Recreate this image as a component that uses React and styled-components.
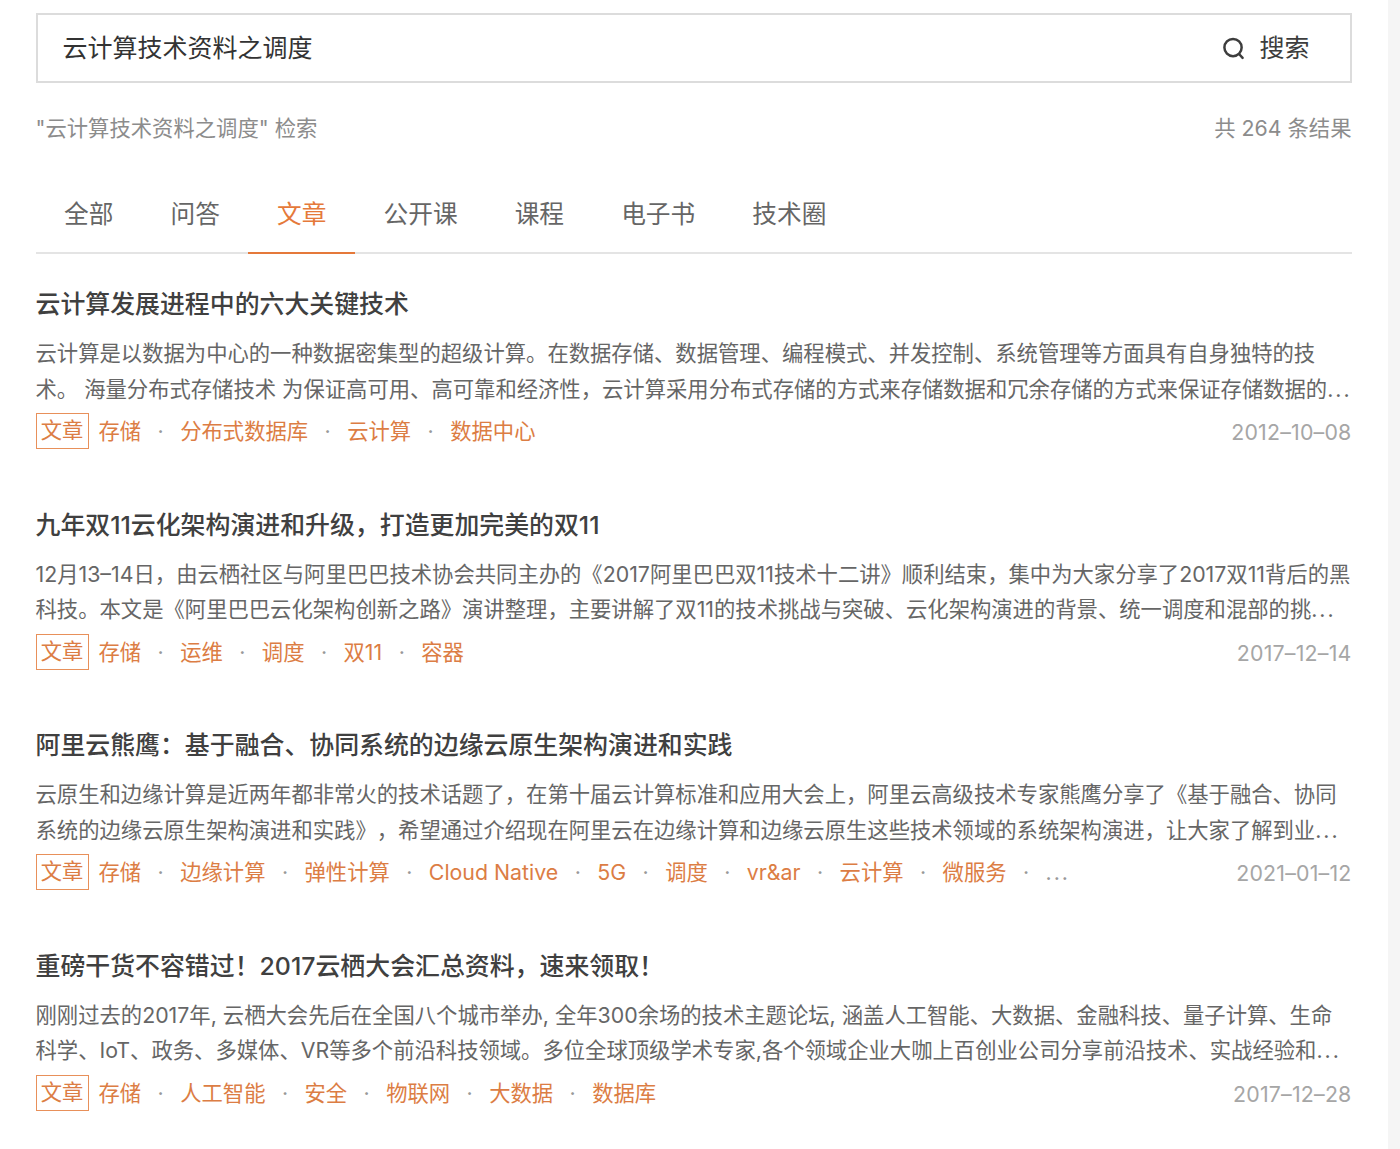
import styled, { createGlobalStyle } from "styled-components";

const tabs = ["全部", "问答", "文章", "公开课", "课程", "电子书", "技术圈"];

const articles = [
  {
    id: 1,
    title: "云计算发展进程中的六大关键技术",
    first: "云计算是以数据为中心的一种数据密集型的超级计算。在数据存储、数据管理、编程模式、并发控制、系统管理等方面具有自身独特的技",
    second: "术。 海量分布式存储技术 为保证高可用、高可靠和经济性，云计算采用分布式存储的方式来存储数据和冗余存储的方式来保证存储数据的",
    tags: ["存储", "分布式数据库", "云计算", "数据中心"],
    date: "2012–10–08",
  },
  {
    id: 2,
    title: "九年双11云化架构演进和升级，打造更加完美的双11",
    first: "12月13–14日，由云栖社区与阿里巴巴技术协会共同主办的《2017阿里巴巴双11技术十二讲》顺利结束，集中为大家分享了2017双11背后的黑",
    second: "科技。本文是《阿里巴巴云化架构创新之路》演讲整理，主要讲解了双11的技术挑战与突破、云化架构演进的背景、统一调度和混部的挑",
    tags: ["存储", "运维", "调度", "双11", "容器"],
    date: "2017–12–14",
  },
  {
    id: 3,
    title: "阿里云熊鹰：基于融合、协同系统的边缘云原生架构演进和实践",
    first: "云原生和边缘计算是近两年都非常火的技术话题了，在第十届云计算标准和应用大会上，阿里云高级技术专家熊鹰分享了《基于融合、协同",
    second: "系统的边缘云原生架构演进和实践》，希望通过介绍现在阿里云在边缘计算和边缘云原生这些技术领域的系统架构演进，让大家了解到业",
    tags: ["存储", "边缘计算", "弹性计算", "Cloud Native", "5G", "调度", "vr&ar", "云计算", "微服务"],
    more: true,
    date: "2021–01–12",
  },
  {
    id: 4,
    title: "重磅干货不容错过！2017云栖大会汇总资料，速来领取！",
    first: "刚刚过去的2017年, 云栖大会先后在全国八个城市举办, 全年300余场的技术主题论坛, 涵盖人工智能、大数据、金融科技、量子计算、生命",
    second: "科学、IoT、政务、多媒体、VR等多个前沿科技领域。多位全球顶级学术专家,各个领域企业大咖上百创业公司分享前沿技术、实战经验和",
    tags: ["存储", "人工智能", "安全", "物联网", "大数据", "数据库"],
    date: "2017–12–28",
  },
];

const SearchIcon = () => (
  <IconWrap>
    <svg width="24" height="24" viewBox="0 0 24 24" fill="none" stroke="#3d3d3d" strokeWidth="2.6" strokeLinecap="round">
      <circle cx="11.5" cy="11" r="9" />
      <path d="M18 18l3.5 3.8" />
    </svg>
  </IconWrap>
);

const App = () => {
  return (
    <Page>
      <GlobalStyle />
      <Main>
        <SearchBar>
          <SearchText>云计算技术资料之调度</SearchText>
          <SearchButton>
            <SearchIcon />
            <span>搜索</span>
          </SearchButton>
        </SearchBar>
        <Summary>
          <span>"云计算技术资料之调度" 检索</span>
          <span>共 264 条结果</span>
        </Summary>
        <Tabs>
          {tabs.map((tab) => (
            <Tab key={tab} $isActive={tab === "文章"}>
              {tab}
            </Tab>
          ))}
        </Tabs>
        {articles.map((article) => (
          <Article key={article.id}>
            <Title>{article.title}</Title>
            <Line>{article.first}</Line>
            <Line>
              {article.second}
              <Dots>...</Dots>
            </Line>
            <Meta>
              <TagList>
                <Badge>文章</Badge>
                {article.tags.map((tag) => (
                  <Tag key={tag}>{tag}</Tag>
                ))}
                {article.more && <More><Dots>...</Dots></More>}
              </TagList>
              <DateText>{article.date}</DateText>
            </Meta>
          </Article>
        ))}
      </Main>
    </Page>
  );
};

export default App;

const GlobalStyle = createGlobalStyle`
  html, body {
    margin: 0;
    padding: 0;
    background: #ffffff;
  }
  * {
    box-sizing: border-box;
  }
`;

const Page = styled.div`
  width: 1400px;
  height: 1149px;
  overflow: hidden;
  background: #ffffff;
  border-right: 12px solid #f5f5f5;
  font-family: Inter, "Noto Sans CJK SC", sans-serif;
  text-spacing-trim: space-all;
`;

const Main = styled.div`
  display: flex;
  flex-direction: column;
  width: 1316px;
  margin-left: 35.5px;
  padding-top: 13px;
`;

const SearchBar = styled.div`
  display: flex;
  justify-content: space-between;
  align-items: center;
  height: 70px;
  padding: 0 40px 4px 25px;
  border: 2px solid #dcdcdc;
`;

const SearchText = styled.span`
  font-size: 25px;
  color: #333333;
`;

const SearchButton = styled.div`
  display: flex;
  align-items: center;
  gap: 15px;
  font-size: 25px;
  color: #3d3d3d;
`;

const IconWrap = styled.span`
  display: flex;
  margin-top: 4px;
  margin-right: -1px;

  svg {
    width: 23px;
    height: 23px;
  }
`;

const Summary = styled.div`
  display: flex;
  justify-content: space-between;
  align-items: center;
  height: 30px;
  margin-top: 28px;
  font-size: 21.33px;
  color: #8c8c8c;
`;

const Tabs = styled.div`
  display: flex;
  height: 83px;
  margin-top: 30px;
  border-bottom: 2px solid #e4e4e4;
`;

const Tab = styled.div`
  display: flex;
  align-items: center;
  padding: 0 28.55px;
  height: 83px;
  font-size: 24.7px;
  color: ${(props) => (props.$isActive ? "#e5793a" : "#666666")};
  border-bottom: 2px solid ${(props) => (props.$isActive ? "#e5793a" : "transparent")};
`;

const Article = styled.div`
  display: flex;
  flex-direction: column;
  height: 220.5px;
  padding-top: 32px;
`;

const Title = styled.div`
  height: 36px;
  margin-bottom: 14px;
  line-height: 36px;
  font-size: 24.9px;
  font-weight: 500;
  color: #404040;
  white-space: nowrap;
`;

const Line = styled.div`
  height: 35.5px;
  line-height: 35.5px;
  font-size: 21.33px;
  color: #666666;
  white-space: nowrap;
`;

const Dots = styled.span`
  letter-spacing: 2px;
`;

const Meta = styled.div`
  display: flex;
  justify-content: space-between;
  align-items: center;
  height: 36px;
  margin-top: 6px;
`;

const TagList = styled.div`
  display: flex;
  align-items: center;
`;

const Badge = styled.span`
  display: flex;
  justify-content: center;
  align-items: center;
  width: 53px;
  height: 36px;
  margin-right: 10px;
  padding-bottom: 2px;
  line-height: 30px;
  border: 1.5px solid #e8905a;
  font-size: 21.33px;
  color: #dc7d44;
`;

const Tag = styled.span`
  display: flex;
  align-items: center;
  line-height: 30px;
  font-size: 21.33px;
  color: #dc7d44;

  & + &::before {
    content: "·";
    width: 39px;
    text-align: center;
    color: #999999;
  }
`;

const More = styled.span`
  display: flex;
  align-items: center;
  line-height: 30px;
  font-size: 21.33px;
  color: #999999;

  &::before {
    content: "·";
    width: 39px;
    text-align: center;
  }
`;

const DateText = styled.span`
  padding-top: 2px;
  font-size: 21.33px;
  letter-spacing: 0.2px;
  color: #a6a6a6;
`;
